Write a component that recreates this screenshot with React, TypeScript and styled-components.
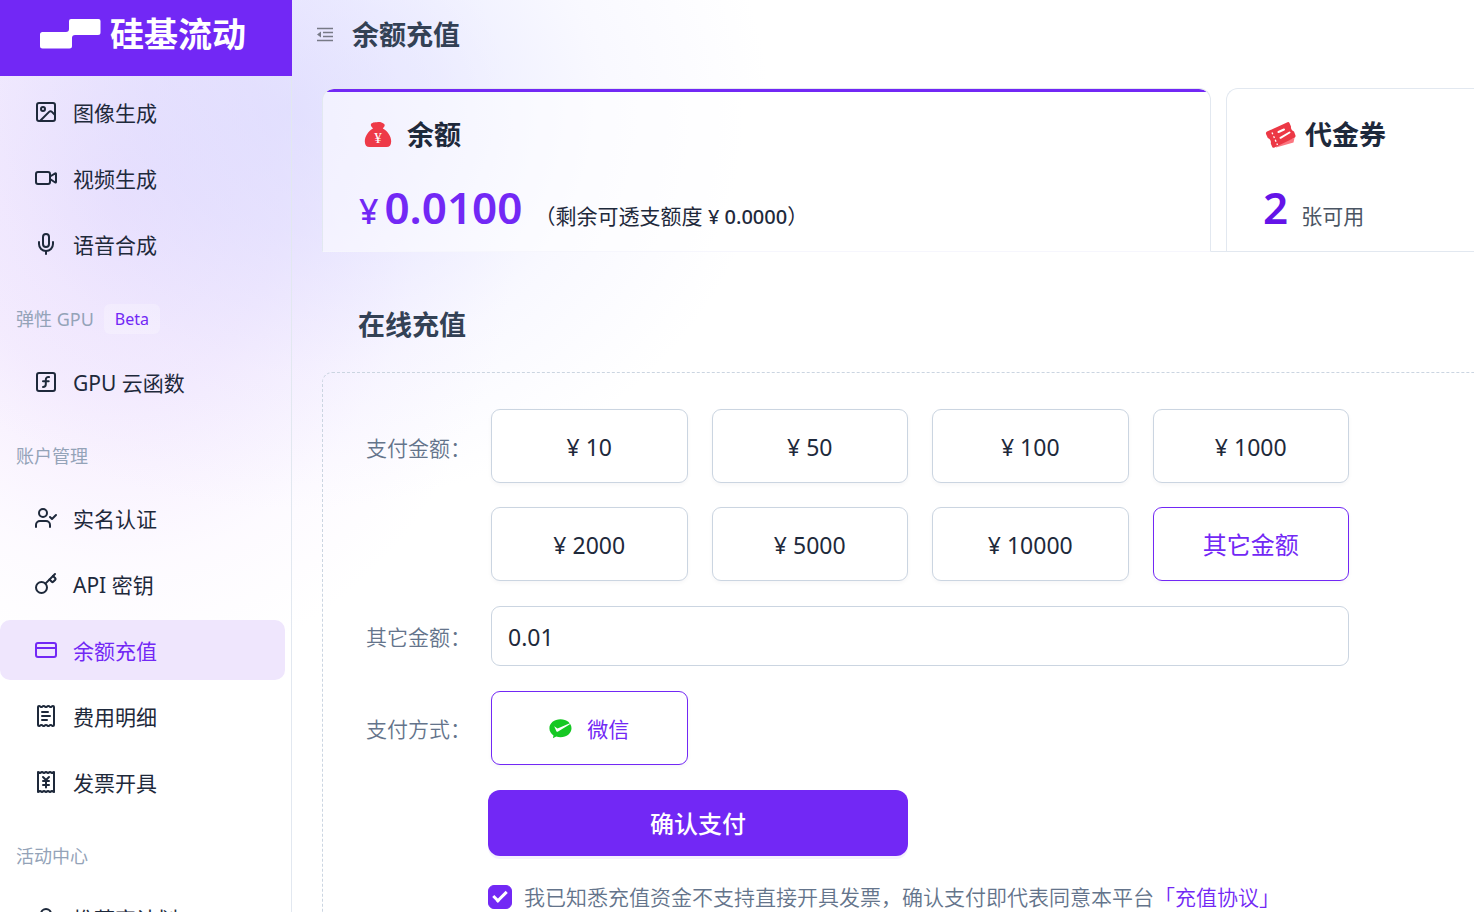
import React, { useState } from 'react';
import styled, { createGlobalStyle } from 'styled-components';
import {
  CreditCard,
  Image,
  Key,
  Mic,
  ReceiptJapaneseYen,
  ReceiptText,
  SquareFunction,
  UserCheck,
  UserRound,
  Video,
  type LucideIcon,
} from 'lucide-react';

const purple = '#7228f5';
const ink = '#1e293b';
const slate = '#64748b';
const line = '#e2e8f0';
const fieldLine = '#cbd5e1';

const GlobalStyle = createGlobalStyle`
  *, *::before, *::after { box-sizing: border-box; }
  body {
    margin: 0;
    background: #fff;
    color: ${ink};
    font-family: "Noto Sans", "Noto Sans CJK SC", sans-serif;
    font-size: 21px;
    line-height: 30px;
  }
  button, input { font: inherit; color: inherit; }
  a { color: inherit; text-decoration: none; }
  h1, h2, p { margin: 0; }
`;

const Page = styled.div`
  display: flex;
  height: 100vh;
  overflow: hidden;
  background:
    radial-gradient(ellipse 480px 400px at 290px 110px, rgba(205, 208, 255, 0.5), rgba(205, 208, 255, 0.38) 30%, rgba(215, 215, 255, 0.16) 65%, rgba(255, 255, 255, 0) 100%),
    radial-gradient(ellipse 400px 480px at 120px 200px, rgba(226, 200, 252, 0.46), rgba(230, 205, 252, 0.36) 40%, rgba(240, 222, 255, 0.14) 75%, rgba(255, 255, 255, 0) 100%),
    #fff;
`;

const Sidebar = styled.aside`
  flex: 0 0 292px;
  display: flex;
  flex-direction: column;
  overflow: hidden;
`;

const Brand = styled.a`
  flex: none;
  display: flex;
  align-items: center;
  gap: 9px;
  height: 76px;
  padding: 0 40px 8px;
  background: ${purple};
  color: #fff;
  font-size: 34px;
  font-weight: 700;
  line-height: 48px;
  white-space: nowrap;
`;

const Nav = styled.nav`
  flex: 1;
  display: flex;
  flex-direction: column;
  gap: 6px;
  padding: 6px 6px 0 0;
  border-right: 1px solid ${line};
`;

const NavItem = styled.a<{ $active?: boolean }>`
  flex: none;
  display: flex;
  align-items: center;
  gap: 15px;
  height: 60px;
  padding-left: 34px;
  border-radius: 10px;
  color: ${p => (p.$active ? purple : ink)};
  background: ${p => (p.$active ? '#efe6fd' : 'transparent')};
  svg { flex: none; }
`;

const NavText = styled.span`
  padding-top: 1px;
`;

const NavGroup = styled.div`
  flex: none;
  display: flex;
  align-items: center;
  gap: 10px;
  padding: 24px 16px 12px;
  color: #94a3b8;
  font-size: 18px;
  line-height: 28px;
`;

const Beta = styled.span`
  padding: 0 11px;
  border-radius: 6px;
  background: rgba(255, 255, 255, 0.25);
  color: ${purple};
  font-size: 16px;
  line-height: 30px;
`;

const Main = styled.main`
  flex: 1;
  min-width: 0;
  overflow: hidden;
`;

const TopBar = styled.header`
  display: flex;
  align-items: center;
  gap: 18px;
  height: 70px;
  padding-left: 24px;
`;

const FoldButton = styled.button`
  display: flex;
  padding: 0;
  border: 0;
  background: none;
  color: #777a86;
`;

const Title = styled.h1`
  color: #334155;
  font-size: 27px;
  line-height: 36px;
`;

const Tabs = styled.div`
  display: flex;
  gap: 15px;
  margin: 18px 0 0 30px;
  box-shadow: inset 0 -1px 0 ${line};
`;

const TabCard = styled.button<{ $active?: boolean }>`
  display: flex;
  flex-direction: column;
  align-items: flex-start;
  flex: ${p => (p.$active ? '1 1 0' : '0 0 248px')};
  height: 164px;
  padding: 28px 0 0 36px;
  border: 1px solid ${line};
  border-right-width: ${p => (p.$active ? '1px' : '0')};
  border-bottom-color: ${p => (p.$active ? '#f6f6fd' : line)};
  border-radius: ${p => (p.$active ? '12px 12px 0 0' : '12px 0 0 0')};
  background: ${p =>
    p.$active
      ? `linear-gradient(${purple}, ${purple}) top / 100% 3px no-repeat padding-box, rgba(255, 255, 255, 0.5)`
      : '#fff'};
  text-align: left;
  white-space: nowrap;
`;

const CardHead = styled.span<{ $gap: number }>`
  display: flex;
  align-items: center;
  gap: ${p => p.$gap}px;
  font-size: 27px;
  font-weight: 700;
  line-height: 36px;
`;

const CardFigure = styled.span`
  display: flex;
  align-items: baseline;
  margin-top: 22px;
  line-height: 64px;
`;

const Currency = styled.span`
  margin-right: 6px;
  color: ${purple};
  font-size: 34px;
  font-weight: 500;
`;

const Amount = styled.span<{ $color?: string }>`
  color: ${p => p.$color ?? purple};
  font-size: 44px;
  font-weight: 600;
`;

const Overdraft = styled.span`
  margin-left: 12px;
  b { font-size: 20px; font-weight: 500; }
`;

const Available = styled.span`
  margin-left: 13px;
  color: #4b5563;
`;

const SectionTitle = styled.h2`
  margin: 55px 0 29px 66px;
  color: #334155;
  font-size: 27px;
  line-height: 36px;
`;

const Panel = styled.form`
  display: flex;
  flex-direction: column;
  gap: 25px;
  margin-left: 30px;
  padding: 36px 125px 36px 43px;
  border: 1px dashed ${fieldLine};
  border-right: 0;
  border-radius: 10px 0 0 0;
`;

const Row = styled.div`
  display: flex;
  align-items: flex-start;
`;

const Label = styled.label<{ $line: number }>`
  flex: 0 0 125px;
  height: 60px;
  color: ${slate};
  font-weight: 350;
  line-height: ${p => p.$line}px;
  white-space: nowrap;
`;

const Choices = styled.div`
  flex: 1;
  display: grid;
  grid-template-columns: repeat(4, 1fr);
  gap: 24px;
`;

const Choice = styled.button<{ $active?: boolean; $size?: number }>`
  display: flex;
  align-items: center;
  justify-content: center;
  gap: 15px;
  height: 74px;
  padding: 2px 0 0;
  border: 1px solid ${p => (p.$active ? purple : fieldLine)};
  border-radius: 9px;
  background: #fff;
  box-shadow: 0 2px 4px rgba(15, 23, 42, 0.04);
  color: ${p => (p.$active ? purple : ink)};
  font-size: ${p => p.$size ?? 23}px;
`;

const AmountInput = styled.input`
  flex: 1;
  min-width: 0;
  height: 60px;
  padding: 2px 16px 0;
  border: 1px solid ${fieldLine};
  border-radius: 9px;
  background: #fff;
  font-size: 23px;
  outline: none;
`;

const Actions = styled.div`
  display: flex;
  flex-direction: column;
  align-items: flex-start;
  gap: 26px;
  padding-left: 122px;
`;

const Submit = styled.button`
  width: 420px;
  max-width: 100%;
  height: 66px;
  padding: 2px 0 0;
  border: 0;
  border-radius: 12px;
  background: ${purple};
  box-shadow: 0 3px 0 rgba(114, 40, 245, 0.07);
  color: #fff;
  font-size: 24px;
  font-weight: 500;
`;

const Agreement = styled.label`
  display: flex;
  align-items: center;
  gap: 12px;
  color: ${slate};
  font-weight: 350;
  white-space: nowrap;
  a { color: ${purple}; }
`;

const Checkbox = styled.input`
  appearance: none;
  flex: none;
  display: grid;
  place-items: center;
  width: 24px;
  height: 24px;
  margin: 0;
  border: 1px solid ${purple};
  border-radius: 6px;
  &:checked { background: ${purple}; }
  &:checked::after {
    content: '';
    width: 8px;
    height: 14px;
    margin-bottom: 4px;
    border: solid #fff;
    border-width: 0 3px 3px 0;
    transform: rotate(45deg);
  }
`;

const LogoMark = () => (
  <svg width="61" height="30" viewBox="0 0 61 30" fill="#fff" aria-hidden="true">
    <path d="M31 0H58.500Q60.500 0 60.500 2V13.500Q60.500 16 58 16H35Q32 16 32 19V27Q32 29.500 29.500 29.500H2.500Q0 29.500 0 27V15.500Q0 13 2.500 13H26Q29 13 29 10V2Q29 0 31 0Z" />
  </svg>
);

const FoldIcon = () => (
  <svg width="18" height="16" viewBox="0 0 18 16" fill="none" stroke="currentColor" aria-hidden="true">
    <path d="M1 1.500H17M7 5.500H17M7 9.500H17M1 13.500H17" strokeWidth="1.300" />
    <path d="M5 4.500V10.500L1 7.500Z" fill="currentColor" stroke="none" />
  </svg>
);

const MoneyBag = () => (
  <svg width="38" height="28" viewBox="1 0 38 28" aria-hidden="true">
    <path
      fill="#ee3a48"
      d="M13 3C15 .8 17.500 1.500 19 1.200C21 .5 24 1 25.500 2.500Q27.500 3.500 26.500 5.200L24.800 7.500C29.500 10 33.200 15 33.200 20.500Q33 26 28.500 26H11.500Q7 26 6.800 20.500C6.800 15 10.500 10 15 7.500L13.200 5.200Q12.500 4 13 3Z"
    />
    <text x="20" y="22" fill="#fff" fontSize="15" fontWeight="400" textAnchor="middle" fontFamily="Liberation Serif, serif">
      ¥
    </text>
  </svg>
);

const Voucher = () => (
  <svg width="34" height="28" viewBox="-2 0 34 28" aria-hidden="true">
    <path fill="#fb7680" d="M11 26.500L28.500 21.500L29.500 17L12 22Z" />
    <path
      fill="#ec3845"
      d="M2 10.500L22.500 1.200Q24 .8 24.600 2.200L26 5.500Q25.500 9 29 10.500L30.500 14.500Q30.800 16 29.500 16.700L9.500 26.500Q7.500 27.200 7 25.500L5.800 22.500Q6.500 18.500 2.800 17L1 13Q.6 11.300 2 10.500Z"
    />
    <path d="M7 11.500L12.500 24" stroke="#fff" strokeWidth="1.300" strokeDasharray="2 2" />
    <path d="M13.500 11L19 8.500M15.500 16.800L24.500 11.500" stroke="#fff" strokeWidth="2" strokeLinecap="round" />
  </svg>
);

const WeChatPay = () => (
  <svg width="23" height="20" viewBox="0 0 23 20" aria-hidden="true">
    <path
      fill="#15c823"
      d="M11.500.300C5.200.300.400 4.300.400 9.200C.400 12.200 2 14.800 4.500 16.400L3.900 19.300L7.200 17.500C8.600 18 10 18.200 11.500 18.200C17.700 18.200 22.500 14.200 22.500 9.200C22.500 4.300 17.700.300 11.500.300Z"
    />
    <path fill="#fff" d="M5.200 7.300L8.500 9.400L21.500 4L20.500 5.500L9.100 12.500Q8 13.200 7.400 12.200Z" />
  </svg>
);

type Entry = { label: string; icon: LucideIcon };

const groups: { title?: string; beta?: boolean; items: Entry[] }[] = [
  {
    items: [
      { label: '图像生成', icon: Image },
      { label: '视频生成', icon: Video },
      { label: '语音合成', icon: Mic },
    ],
  },
  { title: '弹性 GPU', beta: true, items: [{ label: 'GPU 云函数', icon: SquareFunction }] },
  {
    title: '账户管理',
    items: [
      { label: '实名认证', icon: UserCheck },
      { label: 'API 密钥', icon: Key },
      { label: '余额充值', icon: CreditCard },
      { label: '费用明细', icon: ReceiptText },
      { label: '发票开具', icon: ReceiptJapaneseYen },
    ],
  },
  { title: '活动中心', items: [{ label: '推荐官计划', icon: UserRound }] },
];

const amounts = ['¥ 10', '¥ 50', '¥ 100', '¥ 1000', '¥ 2000', '¥ 5000', '¥ 10000'];

export default function App() {
  const [picked, setPicked] = useState('other');
  const [value, setValue] = useState('0.01');
  const [agreed, setAgreed] = useState(true);

  return (
    <>
      <GlobalStyle />
      <Page>
        <Sidebar>
          <Brand href="#">
            <LogoMark />
            硅基流动
          </Brand>
          <Nav>
            {groups.map(group => (
              <React.Fragment key={group.title ?? 'top'}>
                {group.title && (
                  <NavGroup>
                    {group.title}
                    {group.beta && <Beta>Beta</Beta>}
                  </NavGroup>
                )}
                {group.items.map(({ label, icon: Icon }) => (
                  <NavItem key={label} href="#" $active={label === '余额充值'}>
                    <Icon size={24} strokeWidth={2} />
                    <NavText>{label}</NavText>
                  </NavItem>
                ))}
              </React.Fragment>
            ))}
          </Nav>
        </Sidebar>
        <Main>
          <TopBar>
            <FoldButton type="button" aria-label="收起菜单">
              <FoldIcon />
            </FoldButton>
            <Title>余额充值</Title>
          </TopBar>
          <Tabs role="tablist">
            <TabCard type="button" role="tab" aria-selected="true" $active>
              <CardHead $gap={10}>
                <MoneyBag />
                余额
              </CardHead>
              <CardFigure>
                <Currency>¥</Currency>
                <Amount>0.0100</Amount>
                <Overdraft>
                  （剩余可透支额度 <b>¥ 0.0000</b>）
                </Overdraft>
              </CardFigure>
            </TabCard>
            <TabCard type="button" role="tab" aria-selected="false">
              <CardHead $gap={8}>
                <Voucher />
                代金券
              </CardHead>
              <CardFigure>
                <Amount $color="#6414e8">2</Amount>
                <Available>张可用</Available>
              </CardFigure>
            </TabCard>
          </Tabs>
          <SectionTitle>在线充值</SectionTitle>
          <Panel onSubmit={e => e.preventDefault()}>
            <Row>
              <Label as="span" id="amount-label" $line={78}>支付金额：</Label>
              <Choices role="group" aria-labelledby="amount-label">
                {amounts.map(text => (
                  <Choice key={text} type="button" $active={picked === text} onClick={() => setPicked(text)}>
                    {text}
                  </Choice>
                ))}
                <Choice type="button" $size={24} $active={picked === 'other'} onClick={() => setPicked('other')}>
                  其它金额
                </Choice>
              </Choices>
            </Row>
            <Row>
              <Label htmlFor="other-amount" $line={62}>其它金额：</Label>
              <AmountInput id="other-amount" value={value} onChange={e => setValue(e.target.value)} />
            </Row>
            <Row>
              <Label as="span" id="method-label" $line={76}>支付方式：</Label>
              <Choices role="group" aria-labelledby="method-label">
                <Choice type="button" $active $size={21}>
                  <WeChatPay />
                  微信
                </Choice>
              </Choices>
            </Row>
            <Actions>
              <Submit type="submit">确认支付</Submit>
              <Agreement>
                <Checkbox type="checkbox" checked={agreed} onChange={e => setAgreed(e.target.checked)} />
                <span>
                  我已知悉充值资金不支持直接开具发票，确认支付即代表同意本平台<a href="#">「充值协议」</a>
                </span>
              </Agreement>
            </Actions>
          </Panel>
        </Main>
      </Page>
    </>
  );
}
